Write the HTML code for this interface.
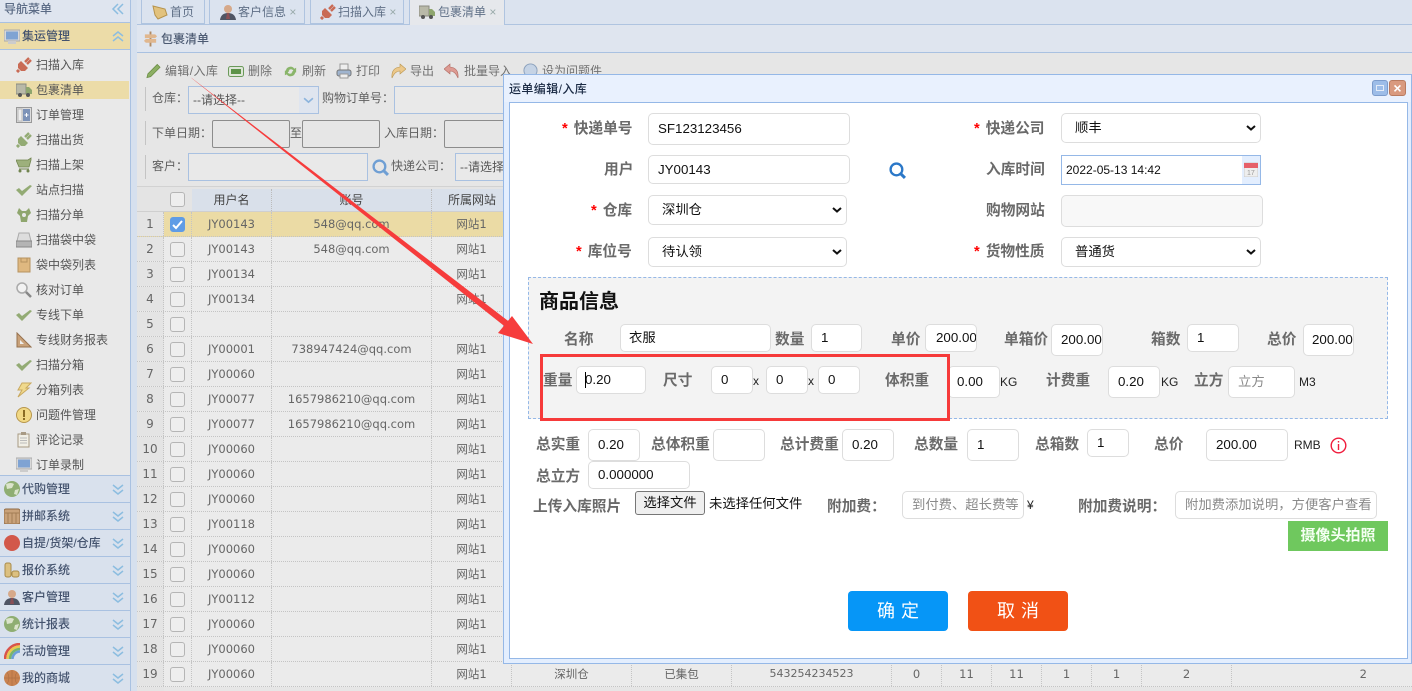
<!DOCTYPE html>
<html lang="zh"><head><meta charset="utf-8"><title>包裹清单</title>
<style>
*{box-sizing:border-box}
html,body{margin:0;padding:0;width:1412px;height:691px;overflow:hidden;background:#e6e6e6}
body{position:relative;font:12px/20px "Liberation Sans","Noto Sans CJK SC",sans-serif;color:#555}
.a,.it,.h,.l,.i,.t,.c,.tb,.fl,.ri{position:absolute}
svg{display:block}
.side{position:absolute;left:0;top:0;width:131px;height:691px;background:#e9e9e9;border-right:1px solid #a9c1e1}
.it{left:36px;height:20px;color:#555;white-space:nowrap}
.ic{position:absolute;width:16px;height:16px}
.h{left:0;width:130px;height:27px;background:#d9e1ed;border-bottom:1px solid #a9c1e1;font-weight:500;color:#44536e;padding-left:22px;line-height:26px;white-space:nowrap}
.h svg.ch{position:absolute;left:111px;top:7px}
.h svg.ic{left:4px;top:5px}
.tab{position:absolute;top:0;height:24px;background:#dbe3ef;border:1px solid #afc4e0;border-top:0;color:#5f6f86;line-height:24px;white-space:nowrap}
.tb{top:61px;color:#707070;white-space:nowrap}
.fl{color:#5f5f5f;white-space:nowrap}
.ri{border:1px solid #a9c1e1;background:#e9e9e9}
.row{position:absolute;left:137px;width:1275px;height:25px;background:#ebebeb;border-bottom:1px dotted #c4c4c4}
.row.s{background:#ebdba5}
.c{top:0;height:24px;line-height:24px;text-align:center;font-family:"DejaVu Sans","Noto Sans CJK SC",sans-serif;font-size:11.5px;color:#666;border-right:1px dotted #c4c4c4;white-space:nowrap}
.n{left:0;width:27px;background:#e4e4e4;color:#666;font-size:12px}
.k{left:27px;width:28px}
.u{left:55px;width:80px}.m{left:135px;width:160px}.w{left:295px;width:80px}
.cb{position:absolute;left:6px;top:5px;width:15px;height:15px;border:1px solid #b5b5b5;border-radius:3px;background:#eee}
.cb.on{background:#5f9ce6;border-color:#5f9ce6}
.modal{position:absolute;left:503px;top:74px;width:909px;height:590px;background:#e3eefe;border:1px solid #95b8e7}
.in{position:absolute;left:5px;top:27px;width:899px;height:557px;background:#fff;border:1px solid #95b8e7}
.m2{position:absolute;left:0;top:0;width:1412px;height:691px;pointer-events:none}
.l{font-size:14.7px;font-weight:700;color:#6a6a6a;white-space:nowrap;line-height:20px}
.l i{font-style:normal;color:#f00;margin-right:6px;font-size:14.7px}
.i{background:#fff;border:1px solid #ddd;border-radius:5px;color:#111;font-size:13.33px;padding-left:9px;display:flex;align-items:center;white-space:nowrap;overflow:hidden}
.i.s{padding-left:13px}
.i .arr{position:absolute;right:4px;top:50%;margin-top:-3px}
.t{color:#222;white-space:nowrap}
.ph{color:#8a8a8a;font-size:13.33px}
</style></head><body>

<svg width="0" height="0" style="position:absolute"><defs>
<symbol id="plug" viewBox="0 0 16 16"><path d="M5 4l7 7-3 3H5L2 11V7z" fill="currentColor"/><path d="M9 5l4-4M11 7l4-4" stroke="currentColor" stroke-width="2.400"/><path d="M3 13l-2 2" stroke="currentColor" stroke-width="3"/></symbol>
<symbol id="truck" viewBox="0 0 16 16"><rect x="0" y="2" width="10" height="10" fill="#b9b9a8" stroke="#8c8c80"/><path d="M10 5h3l3 3v4h-6z" fill="#8fa66e"/><circle cx="4" cy="13" r="2" fill="#555"/><circle cx="12" cy="13" r="2" fill="#555"/></symbol>
<symbol id="panel" viewBox="0 0 16 16"><rect x=".5" y=".5" width="15" height="15" fill="#ddd" stroke="#999"/><rect x="7" y="2" width="7" height="12" fill="#7d93b8"/><rect x="2" y="2" width="4" height="12" fill="#eee" stroke="#bbb"/><path d="M8.500 8h4M10.500 6v4" stroke="#fff"/></symbol>
<symbol id="cart" viewBox="0 0 16 16"><path d="M0 3h12l3-2v2l-2 7H3z" fill="#9db07c" stroke="#71844f" stroke-width=".8"/><path d="M3 12h10" stroke="#71844f"/><circle cx="4" cy="14" r="1.500" fill="#71844f"/><circle cx="12" cy="14" r="1.500" fill="#71844f"/></symbol>
<symbol id="check" viewBox="0 0 16 16"><path d="M0 8l3-2 3 3 8-6 2 1-10 10z" fill="#93ab74"/></symbol>
<symbol id="fork" viewBox="0 0 16 16"><path d="M3 1l3 3h4l3-3 2 5-3 3-1 6H5L4 9 1 6z" fill="#8fa66e"/><circle cx="8" cy="8" r="2" fill="#e9e9e9"/></symbol>
<symbol id="scan" viewBox="0 0 16 16"><path d="M3 1h10l2 8H1z" fill="#ddd" stroke="#aaa"/><rect x="0" y="9" width="16" height="6" fill="#b4b4b4" stroke="#888"/></symbol>
<symbol id="box" viewBox="0 0 16 16"><rect x="2" y="1" width="12" height="14" fill="#dfb880" stroke="#b69260"/><path d="M5 1v4h6V1" fill="none" stroke="#b69260"/></symbol>
<symbol id="mag" viewBox="0 0 16 16"><circle cx="6" cy="6" r="5" fill="#f2f2f2" stroke="#aaa" stroke-width="1.500"/><path d="M10 10l5 5" stroke="#888" stroke-width="2.500"/></symbol>
<symbol id="ruler" viewBox="0 0 16 16"><path d="M1 1l14 14H1z" fill="#c9a27a" stroke="#97724f"/><path d="M4 8l4 4H4z" fill="#eee"/></symbol>
<symbol id="bolt" viewBox="0 0 16 16"><path d="M6 1h9l-5 5h3L2 15l4-7H2z" fill="#f0d98d" stroke="#c9a960"/></symbol>
<symbol id="warn" viewBox="0 0 16 16"><circle cx="8" cy="8" r="7.500" fill="#f1d884" stroke="#b8974d"/><rect x="7" y="3" width="2" height="7" fill="#8a6c23"/><rect x="7" y="11" width="2" height="2" fill="#8a6c23"/></symbol>
<symbol id="clip" viewBox="0 0 16 16"><rect x="2" y="2" width="11" height="13" fill="#f1efe6" stroke="#a89a84"/><rect x="5" y="0" width="5" height="3" fill="#a89a84"/><path d="M4 6h7M4 8.500h7M4 11h7" stroke="#bbb"/></symbol>
<symbol id="mon" viewBox="0 0 16 16"><rect x="0" y="1" width="16" height="11" fill="#d8d8d8" stroke="#aaa"/><rect x="2" y="2.500" width="12" height="8" fill="#7fa3d3"/><rect x="4" y="12" width="8" height="3" fill="#ccc"/></symbol>
<symbol id="globe" viewBox="0 0 16 16"><circle cx="8" cy="8" r="8" fill="#8fae72"/><path d="M2 3q5-2 8 0l-2 4-5 1zM11 9l4-1-2 6-3-1z" fill="#dbe4cb"/></symbol>
<symbol id="crate" viewBox="0 0 16 16"><rect x="0" y="1" width="16" height="15" rx="2" fill="#c9a27a" stroke="#916b44"/><path d="M4 5v10M8 5v10M12 5v10M1 5h14" stroke="#a37d55"/></symbol>
<symbol id="stop" viewBox="0 0 16 16"><circle cx="8" cy="8" r="8" fill="#d2584a"/></symbol>
<symbol id="coin" viewBox="0 0 16 16"><rect x="1" y="1" width="6" height="14" rx="2" fill="#dcc080" stroke="#a98b4a"/><rect x="8" y="9" width="7" height="6" rx="2" fill="#dcc080" stroke="#a98b4a"/></symbol>
<symbol id="per" viewBox="0 0 16 16"><circle cx="8" cy="5" r="4" fill="#d6a98a"/><path d="M0 16q1-7 8-7t8 7z" fill="#4f5564"/><path d="M7 9h2l1 6H6z" fill="#8a4f55"/></symbol>
<symbol id="rain" viewBox="0 0 16 16"><path d="M1 16A15 15 0 0 1 16 1" fill="none" stroke="#d9544a" stroke-width="2.500"/><path d="M3.500 16A12.500 12.500 0 0 1 16 3.500" fill="none" stroke="#e9c94f" stroke-width="2.500"/><path d="M6 16A10 10 0 0 1 16 6" fill="none" stroke="#79b56a" stroke-width="2.500"/><path d="M8.500 16A7.500 7.500 0 0 1 16 8.500" fill="none" stroke="#6b9ed8" stroke-width="2.500"/></symbol>
<symbol id="ball" viewBox="0 0 16 16"><circle cx="8" cy="8" r="8" fill="#c98350"/><path d="M0 8h16M8 0v16M3 2q4 6 0 12M13 2q-4 6 0 12" stroke="#a56a40" fill="none" stroke-width=".5"/></symbol>
<symbol id="dd" viewBox="0 0 14 14"><path d="M2 2l5 4 5-4M2 7l5 4 5-4" fill="none" stroke="#8cbde0" stroke-width="1.500"/></symbol>
<symbol id="du" viewBox="0 0 14 14"><path d="M2 6l5-4 5 4M2 11l5-4 5 4" fill="none" stroke="#8cbde0" stroke-width="1.500"/></symbol>
<symbol id="sel" viewBox="0 0 10 6"><path d="M1 1l4 3.500L9 1" fill="none" stroke="#111" stroke-width="2"/></symbol>
<symbol id="q" viewBox="0 0 16 16"><circle cx="7" cy="7" r="5.500" fill="none" stroke="currentColor" stroke-width="2.200"/><path d="M11 11l4 4" stroke="currentColor" stroke-width="2.800"/></symbol>
</defs></svg>

<!-- sidebar -->
<div class="side">
<div class="a" style="left:0;top:0;width:130px;height:23px;background:#dfe5ef;border-bottom:1px solid #a9c1e1"></div>
<div class="a" style="left:4px;top:-1px;color:#5b6b85;font-weight:500">导航菜单</div>
<svg class="a" style="left:111px;top:2px" width="14" height="14" viewBox="0 0 14 14"><path d="M7 2L2 7l5 5M12 2L7 7l5 5" fill="none" stroke="#8cbde0" stroke-width="1.500"/></svg>
<div class="h" style="top:23px;background:#ecdca8"><svg class="ic" style="top:6px"><use href="#mon"/></svg>集运管理<svg class="ch" width="14" height="14"><use href="#du"/></svg></div>
<div class="a" style="left:0;top:81px;width:129px;height:18px;background:#ecdca8"></div>
<svg class="ic" style="left:16px;top:57px;color:#c96b55"><use href="#plug"/></svg><div class="it" style="top:55px">扫描入库</div>
<svg class="ic" style="left:16px;top:82px"><use href="#truck"/></svg><div class="it" style="top:80px">包裹清单</div>
<svg class="ic" style="left:16px;top:107px"><use href="#panel"/></svg><div class="it" style="top:105px">订单管理</div>
<svg class="ic" style="left:16px;top:132px;color:#93ab74"><use href="#plug"/></svg><div class="it" style="top:130px">扫描出货</div>
<svg class="ic" style="left:16px;top:157px"><use href="#cart"/></svg><div class="it" style="top:155px">扫描上架</div>
<svg class="ic" style="left:16px;top:182px"><use href="#check"/></svg><div class="it" style="top:180px">站点扫描</div>
<svg class="ic" style="left:16px;top:207px"><use href="#fork"/></svg><div class="it" style="top:205px">扫描分单</div>
<svg class="ic" style="left:16px;top:232px"><use href="#scan"/></svg><div class="it" style="top:230px">扫描袋中袋</div>
<svg class="ic" style="left:16px;top:257px"><use href="#box"/></svg><div class="it" style="top:255px">袋中袋列表</div>
<svg class="ic" style="left:16px;top:282px"><use href="#mag"/></svg><div class="it" style="top:280px">核对订单</div>
<svg class="ic" style="left:16px;top:307px"><use href="#check"/></svg><div class="it" style="top:305px">专线下单</div>
<svg class="ic" style="left:16px;top:332px"><use href="#ruler"/></svg><div class="it" style="top:330px">专线财务报表</div>
<svg class="ic" style="left:16px;top:357px"><use href="#check"/></svg><div class="it" style="top:355px">扫描分箱</div>
<svg class="ic" style="left:16px;top:382px"><use href="#bolt"/></svg><div class="it" style="top:380px">分箱列表</div>
<svg class="ic" style="left:16px;top:407px"><use href="#warn"/></svg><div class="it" style="top:405px">问题件管理</div>
<svg class="ic" style="left:16px;top:432px"><use href="#clip"/></svg><div class="it" style="top:430px">评论记录</div>
<svg class="ic" style="left:16px;top:457px"><use href="#mon"/></svg><div class="it" style="top:455px">订单录制</div>
<div class="h" style="top:475px;border-top:1px solid #a9c1e1;height:28px"><svg class="ic"><use href="#globe"/></svg>代购管理<svg class="ch" width="14" height="14"><use href="#dd"/></svg></div>
<div class="h" style="top:503px"><svg class="ic"><use href="#crate"/></svg>拼邮系统<svg class="ch" width="14" height="14"><use href="#dd"/></svg></div>
<div class="h" style="top:530px"><svg class="ic"><use href="#stop"/></svg>自提/货架/仓库<svg class="ch" width="14" height="14"><use href="#dd"/></svg></div>
<div class="h" style="top:557px"><svg class="ic"><use href="#coin"/></svg>报价系统<svg class="ch" width="14" height="14"><use href="#dd"/></svg></div>
<div class="h" style="top:584px"><svg class="ic"><use href="#per"/></svg>客户管理<svg class="ch" width="14" height="14"><use href="#dd"/></svg></div>
<div class="h" style="top:611px"><svg class="ic"><use href="#globe"/></svg>统计报表<svg class="ch" width="14" height="14"><use href="#dd"/></svg></div>
<div class="h" style="top:638px"><svg class="ic"><use href="#rain"/></svg>活动管理<svg class="ch" width="14" height="14"><use href="#dd"/></svg></div>
<div class="h" style="top:665px"><svg class="ic"><use href="#ball"/></svg>我的商城<svg class="ch" width="14" height="14"><use href="#dd"/></svg></div>
</div>
<div class="a" style="left:131px;top:0;width:6px;height:691px;background:#d6e0ee"></div>

<!-- tabs -->
<div class="a" style="left:137px;top:0;width:1275px;height:25px;background:#dbe3ef;border-bottom:1px solid #afc4e0"></div>
<div class="tab" style="left:141px;width:64px;padding-left:28px"><svg class="ic" style="left:10px;top:4px" viewBox="0 0 16 16"><path d="M1 2l12 3 2 6-9 4-3-4z" fill="#e2c27d" stroke="#b5934d"/></svg>首页</div>
<div class="tab" style="left:209px;width:96px;padding-left:28px"><svg class="ic" style="left:10px;top:4px"><use href="#per"/></svg>客户信息 <span style="color:#9aa">×</span></div>
<div class="tab" style="left:310px;width:94px;padding-left:27px"><svg class="ic" style="left:9px;top:4px;color:#c96b55"><use href="#plug"/></svg>扫描入库 <span style="color:#9aa">×</span></div>
<div class="tab" style="left:409px;width:96px;height:25px;padding-left:28px;background:#e6e8ec;border-bottom:0"><svg class="ic" style="left:9px;top:4px"><use href="#truck"/></svg>包裹清单 <span style="color:#9aa">×</span></div>

<!-- title -->
<div class="a" style="left:137px;top:25px;width:1275px;height:28px;background:#dfe5ef;border-bottom:1px solid #a9c1e1"></div>
<svg class="a" style="left:143px;top:31px" width="15" height="16" viewBox="0 0 16 16"><path d="M7 0h2v16H7z" fill="#b08a64"/><path d="M2 3h11l2 2-2 2H2zM14 8H3L1 10l2 2h11z" fill="#e0b78f"/></svg>
<div class="a" style="left:161px;top:29px;color:#4c5a72;font-weight:500">包裹清单</div>

<!-- toolbar -->
<svg class="a" style="left:146px;top:63px" width="15" height="16" viewBox="0 0 16 16"><path d="M1 15l1-4L12 1l3 3L5 14z" fill="#8caf63" stroke="#6a8c45" stroke-width=".8"/></svg><div class="tb" style="left:165px;letter-spacing:.4px">编辑/入库</div>
<svg class="a" style="left:228px;top:66px" width="16" height="11"><rect x=".5" y=".5" width="15" height="10" rx="2" fill="#dfe6d8" stroke="#6b9a5a"/><rect x="3" y="3" width="10" height="5" fill="#5d9348"/></svg><div class="tb" style="left:248px">删除</div>
<svg class="a" style="left:283px;top:64px" width="15" height="15" viewBox="0 0 16 16"><path d="M3 7a5 5 0 0 1 9-2l2-1v5h-5l2-2a3 3 0 0 0-5 0zM13 9a5 5 0 0 1-9 2l-2 1V7h5L5 9a3 3 0 0 0 5 0z" fill="#8ab56a"/></svg><div class="tb" style="left:302px">刷新</div>
<svg class="a" style="left:336px;top:63px" width="16" height="16" viewBox="0 0 16 16"><rect x="4" y="1" width="8" height="6" fill="#eee" stroke="#999"/><rect x="1" y="7" width="14" height="6" rx="2" fill="#9fb4cf" stroke="#777"/><rect x="4" y="11" width="8" height="4" fill="#eee" stroke="#999"/></svg><div class="tb" style="left:356px">打印</div>
<svg class="a" style="left:390px;top:63px" width="16" height="16" viewBox="0 0 16 16"><path d="M10 1l6 5-6 5V8Q5 8 2 15 1 5 10 4z" fill="#ecc88a" stroke="#b99550" stroke-width=".6"/></svg><div class="tb" style="left:410px">导出</div>
<svg class="a" style="left:444px;top:63px" width="16" height="16" viewBox="0 0 16 16"><path d="M6 1L0 6l6 5V8q5 0 8 7 1-10-8-11z" fill="#dd9b93" stroke="#b06b62" stroke-width=".6"/></svg><div class="tb" style="left:464px">批量导入</div>
<svg class="a" style="left:523px;top:63px" width="15" height="15" viewBox="0 0 16 16"><circle cx="8" cy="8" r="7" fill="#c5d3e5" stroke="#8aa0bc"/></svg><div class="tb" style="left:542px">设为问题件</div>

<!-- filters -->
<div class="a" style="left:145px;top:87px;width:1px;height:24px;background:#c4c4c4"></div>
<div class="a" style="left:145px;top:121px;width:1px;height:24px;background:#c4c4c4"></div>
<div class="a" style="left:145px;top:155px;width:1px;height:24px;background:#c4c4c4"></div>
<div class="fl" style="left:152px;top:88px">仓库：</div>
<div class="ri" style="left:188px;top:86px;width:131px;height:28px;padding-left:4px;line-height:27px;color:#555">--请选择--<div class="a" style="right:0;top:0;width:19px;height:26px;background:#dfe5ef"></div><svg class="a" style="right:4px;top:10px" width="11" height="7" viewBox="0 0 10 6"><path d="M1 1l4 3.500L9 1" fill="none" stroke="#8cb4dd" stroke-width="1.500"/></svg></div>
<div class="fl" style="left:322px;top:88px">购物订单号：</div>
<div class="ri" style="left:394px;top:86px;width:115px;height:28px"></div>
<div class="fl" style="left:152px;top:123px">下单日期：</div>
<div class="a" style="left:212px;top:120px;width:78px;height:28px;border:1px solid #8c8c8c;border-radius:2px"></div>
<div class="fl" style="left:290px;top:123px">至</div>
<div class="a" style="left:302px;top:120px;width:78px;height:28px;border:1px solid #8c8c8c;border-radius:2px"></div>
<div class="fl" style="left:384px;top:123px">入库日期：</div>
<div class="a" style="left:444px;top:120px;width:70px;height:28px;border:1px solid #8c8c8c;border-radius:2px"></div>
<div class="fl" style="left:152px;top:156px">客户：</div>
<div class="ri" style="left:188px;top:153px;width:180px;height:28px"></div>
<svg class="a" style="left:372px;top:159px;color:#6f9fd4" width="17" height="17"><use href="#q"/></svg>
<div class="fl" style="left:391px;top:156px">快递公司：</div>
<div class="ri" style="left:455px;top:153px;width:60px;height:28px;padding-left:4px;line-height:27px;white-space:nowrap;overflow:hidden">--请选择</div>

<!-- table -->
<div class="a" style="left:137px;top:186px;width:1275px;height:26px;background:#e4e4e4;border-top:1px solid #d2d2d2;border-bottom:1px solid #cfcfcf"></div>
<div class="a" style="left:192px;top:189px;width:320px;height:22px;background:#d9e0ea"></div>
<div class="cb" style="left:170px;top:192px"></div>
<div class="a" style="left:192px;top:189px;width:80px;line-height:22px;text-align:center;color:#444;border-right:1px dotted #bbb;height:22px">用户名</div>
<div class="a" style="left:272px;top:189px;width:160px;line-height:22px;text-align:center;color:#444;border-right:1px dotted #bbb;height:22px">账号</div>
<div class="a" style="left:432px;top:189px;width:80px;line-height:22px;text-align:center;color:#444;height:22px">所属网站</div>

<div class="row s" style="top:212px"><div class="c n">1</div><div class="c k"><div class="cb on"><svg width="13" height="13" viewBox="0 0 13 13"><path d="M2 7l3 3 6-7" fill="none" stroke="#fff" stroke-width="2"/></svg></div></div><div class="c u">JY00143</div><div class="c m">548@qq.com</div><div class="c w">网站1</div></div>
<div class="row" style="top:237px"><div class="c n">2</div><div class="c k"><div class="cb"></div></div><div class="c u">JY00143</div><div class="c m">548@qq.com</div><div class="c w">网站1</div></div>
<div class="row" style="top:262px"><div class="c n">3</div><div class="c k"><div class="cb"></div></div><div class="c u">JY00134</div><div class="c m"></div><div class="c w">网站1</div></div>
<div class="row" style="top:287px"><div class="c n">4</div><div class="c k"><div class="cb"></div></div><div class="c u">JY00134</div><div class="c m"></div><div class="c w">网站1</div></div>
<div class="row" style="top:312px"><div class="c n">5</div><div class="c k"><div class="cb"></div></div><div class="c u"></div><div class="c m"></div><div class="c w"></div></div>
<div class="row" style="top:337px"><div class="c n">6</div><div class="c k"><div class="cb"></div></div><div class="c u">JY00001</div><div class="c m">738947424@qq.com</div><div class="c w">网站1</div></div>
<div class="row" style="top:362px"><div class="c n">7</div><div class="c k"><div class="cb"></div></div><div class="c u">JY00060</div><div class="c m"></div><div class="c w">网站1</div></div>
<div class="row" style="top:387px"><div class="c n">8</div><div class="c k"><div class="cb"></div></div><div class="c u">JY00077</div><div class="c m">1657986210@qq.com</div><div class="c w">网站1</div></div>
<div class="row" style="top:412px"><div class="c n">9</div><div class="c k"><div class="cb"></div></div><div class="c u">JY00077</div><div class="c m">1657986210@qq.com</div><div class="c w">网站1</div></div>
<div class="row" style="top:437px"><div class="c n">10</div><div class="c k"><div class="cb"></div></div><div class="c u">JY00060</div><div class="c m"></div><div class="c w">网站1</div></div>
<div class="row" style="top:462px"><div class="c n">11</div><div class="c k"><div class="cb"></div></div><div class="c u">JY00060</div><div class="c m"></div><div class="c w">网站1</div></div>
<div class="row" style="top:487px"><div class="c n">12</div><div class="c k"><div class="cb"></div></div><div class="c u">JY00060</div><div class="c m"></div><div class="c w">网站1</div></div>
<div class="row" style="top:512px"><div class="c n">13</div><div class="c k"><div class="cb"></div></div><div class="c u">JY00118</div><div class="c m"></div><div class="c w">网站1</div></div>
<div class="row" style="top:537px"><div class="c n">14</div><div class="c k"><div class="cb"></div></div><div class="c u">JY00060</div><div class="c m"></div><div class="c w">网站1</div></div>
<div class="row" style="top:562px"><div class="c n">15</div><div class="c k"><div class="cb"></div></div><div class="c u">JY00060</div><div class="c m"></div><div class="c w">网站1</div></div>
<div class="row" style="top:587px"><div class="c n">16</div><div class="c k"><div class="cb"></div></div><div class="c u">JY00112</div><div class="c m"></div><div class="c w">网站1</div></div>
<div class="row" style="top:612px"><div class="c n">17</div><div class="c k"><div class="cb"></div></div><div class="c u">JY00060</div><div class="c m"></div><div class="c w">网站1</div></div>
<div class="row" style="top:637px"><div class="c n">18</div><div class="c k"><div class="cb"></div></div><div class="c u">JY00060</div><div class="c m"></div><div class="c w">网站1</div></div>
<div class="row" style="top:662px"><div class="c n">19</div><div class="c k"><div class="cb"></div></div><div class="c u">JY00060</div><div class="c m"></div><div class="c w">网站1</div>
<div class="c" style="left:375px;width:120px">深圳仓</div><div class="c" style="left:495px;width:100px">已集包</div><div class="c" style="left:595px;width:160px;font-size:11px">543254234523</div><div class="c" style="left:755px;width:50px">0</div><div class="c" style="left:805px;width:50px">11</div><div class="c" style="left:855px;width:50px">11</div><div class="c" style="left:905px;width:50px">1</div><div class="c" style="left:955px;width:50px">1</div><div class="c" style="left:1005px;width:90px">2</div><div class="c" style="left:1095px;width:180px;text-align:right;padding-right:45px;border-right:0">2</div></div>
<div class="a" style="left:137px;top:687px;width:27px;height:4px;background:#e4e4e4"></div>

<!-- modal -->
<div class="modal">
<div class="a" style="left:0;top:0;width:100%;height:27px;background:#e9f1fe"></div>
<div class="a" style="left:5px;top:4px;color:#1a2a44;font-weight:500;letter-spacing:.4px">运单编辑/入库</div>
<div class="in"></div>
<div class="a" style="left:868px;top:5px;width:16px;height:16px;background:#9dbde8;border:1px solid #7c9ccc;border-radius:3px"><div class="a" style="left:3px;top:4px;width:8px;height:6px;border:1px solid #e4ecf8"></div></div>
<div class="a" style="left:885px;top:5px;width:17px;height:16px;background:#d99a7f;border:1px solid #b97b60;border-radius:3px;color:#fff;font-size:14px;line-height:14px;text-align:center;font-weight:700">×</div>
</div>

<div class="m2">
<div class="l" style="left:562px;top:119px"><i>*</i>快递单号</div>
<div class="i" style="left:648px;top:113px;width:202px;height:32px">SF123123456</div>
<div class="l" style="left:604px;top:160px">用户</div>
<div class="i" style="left:648px;top:155px;width:202px;height:29px">JY00143</div>
<svg class="a" style="left:889px;top:162px;color:#2b78c8" width="17" height="17"><use href="#q"/></svg>
<div class="l" style="left:591px;top:201px"><i>*</i>仓库</div>
<div class="i s" style="left:648px;top:195px;width:199px;height:30px">深圳仓<svg class="arr" width="10" height="6"><use href="#sel"/></svg></div>
<div class="l" style="left:576px;top:242px"><i>*</i>库位号</div>
<div class="i s" style="left:648px;top:237px;width:199px;height:30px">待认领<svg class="arr" width="10" height="6"><use href="#sel"/></svg></div>

<div class="l" style="left:974px;top:119px"><i>*</i>快递公司</div>
<div class="i s" style="left:1061px;top:113px;width:200px;height:30px">顺丰<svg class="arr" width="10" height="6"><use href="#sel"/></svg></div>
<div class="l" style="left:986px;top:160px">入库时间</div>
<div class="i" style="left:1061px;top:155px;width:200px;height:30px;border:1px solid #95b8e7;border-radius:0;padding-left:4px;font-size:12px">2022-05-13 14:42<div class="a" style="right:0;top:0;width:18px;height:28px;background:#e3eefe"></div><svg class="a" style="right:2px;top:6px" width="14" height="15" viewBox="0 0 14 15"><rect y="1" width="14" height="14" fill="#eee" stroke="#ccc"/><rect y="1" width="14" height="5" fill="#e6606a"/><text x="3" y="13" font-size="7" fill="#999" font-family="Liberation Sans">17</text></svg></div>
<div class="l" style="left:986px;top:201px">购物网站</div>
<div class="i" style="left:1061px;top:195px;width:202px;height:32px;background:#f8f8f8"></div>
<div class="l" style="left:974px;top:242px"><i>*</i>货物性质</div>
<div class="i s" style="left:1061px;top:237px;width:200px;height:30px">普通货<svg class="arr" width="10" height="6"><use href="#sel"/></svg></div>

<div class="a" style="left:528px;top:277px;width:860px;height:142px;background:#f3f3f3;border:1px dashed #95b8e7"></div>
<div class="a" style="left:539px;top:290px;font-size:20px;font-weight:700;color:#111;line-height:24px">商品信息</div>

<div class="l" style="left:564px;top:330px">名称</div>
<div class="i" style="left:620px;top:324px;width:151px;height:28px;padding-left:8px">衣服</div>
<div class="l" style="left:775px;top:330px">数量</div>
<div class="i" style="left:811px;top:324px;width:51px;height:28px;padding-left:9px">1</div>
<div class="l" style="left:891px;top:330px">单价</div>
<div class="i" style="left:925px;top:324px;width:52px;height:28px;padding-left:10px">200.00</div>
<div class="l" style="left:1004px;top:330px">单箱价</div>
<div class="i" style="left:1051px;top:324px;width:52px;height:32px;padding-left:9px">200.00</div>
<div class="l" style="left:1151px;top:330px">箱数</div>
<div class="i" style="left:1187px;top:324px;width:52px;height:28px;padding-left:9px">1</div>
<div class="l" style="left:1267px;top:330px">总价</div>
<div class="i" style="left:1303px;top:324px;width:51px;height:32px;padding-left:8px">200.00</div>

<div class="l" style="left:543px;top:371px">重量</div>
<div class="i" style="left:576px;top:366px;width:70px;height:28px;padding-left:8px">0.20</div>
<div class="a" style="left:585px;top:372px;width:1px;height:16px;background:#000"></div>
<div class="l" style="left:663px;top:371px">尺寸</div>
<div class="i" style="left:711px;top:366px;width:42px;height:28px;padding-left:9px">0</div>
<div class="t" style="left:753px;top:371px;font-size:12px">x</div>
<div class="i" style="left:766px;top:366px;width:42px;height:28px;padding-left:9px">0</div>
<div class="t" style="left:808px;top:371px;font-size:12px">x</div>
<div class="i" style="left:818px;top:366px;width:42px;height:28px;padding-left:9px">0</div>
<div class="l" style="left:885px;top:371px">体积重</div>
<div class="i" style="left:948px;top:366px;width:52px;height:32px;padding-left:8px">0.00</div>
<div class="t" style="left:1000px;top:372px">KG</div>
<div class="l" style="left:1046px;top:371px">计费重</div>
<div class="i" style="left:1108px;top:366px;width:52px;height:32px;padding-left:9px">0.20</div>
<div class="t" style="left:1161px;top:372px">KG</div>
<div class="l" style="left:1194px;top:371px">立方</div>
<div class="i ph" style="left:1228px;top:366px;width:67px;height:32px;padding-left:9px;color:#8a8a8a">立方</div>
<div class="t" style="left:1299px;top:372px">M3</div>

<div class="l" style="left:536px;top:435px">总实重</div>
<div class="i" style="left:588px;top:429px;width:52px;height:32px;padding-left:9px">0.20</div>
<div class="l" style="left:651px;top:435px">总体积重</div>
<div class="i" style="left:713px;top:429px;width:52px;height:32px"></div>
<div class="l" style="left:780px;top:435px">总计费重</div>
<div class="i" style="left:842px;top:429px;width:52px;height:32px;padding-left:9px">0.20</div>
<div class="l" style="left:914px;top:435px">总数量</div>
<div class="i" style="left:967px;top:429px;width:52px;height:32px;padding-left:9px">1</div>
<div class="l" style="left:1035px;top:435px">总箱数</div>
<div class="i" style="left:1087px;top:429px;width:42px;height:28px;padding-left:9px">1</div>
<div class="l" style="left:1154px;top:435px">总价</div>
<div class="i" style="left:1206px;top:429px;width:82px;height:32px;padding-left:9px">200.00</div>
<div class="t" style="left:1294px;top:435px">RMB</div>
<svg class="a" style="left:1330px;top:437px" width="17" height="17" viewBox="0 0 17 17"><circle cx="8.500" cy="8.500" r="7.300" fill="none" stroke="#f01c3c" stroke-width="1.400"/><path d="M8.500 7v6M8.500 4v1.500" stroke="#f01c3c" stroke-width="1.400"/></svg>

<div class="l" style="left:536px;top:467px">总立方</div>
<div class="i" style="left:588px;top:461px;width:102px;height:28px;padding-left:9px">0.000000</div>

<div class="l" style="left:533px;top:497px">上传入库照片</div>
<div class="a" style="left:635px;top:491px;width:70px;height:24px;background:#efefef;border:1px solid #767676;border-radius:3px;text-align:center;line-height:22px;color:#111;font-size:13.33px">选择文件</div>
<div class="t" style="left:709px;top:494px;font-size:13.33px;color:#111">未选择任何文件</div>
<div class="l" style="left:827px;top:497px">附加费：</div>
<div class="i ph" style="left:902px;top:491px;width:122px;height:28px;padding-left:9px;color:#8a8a8a">到付费、超长费等</div>
<div class="t" style="left:1027px;top:495px">¥</div>
<div class="l" style="left:1078px;top:497px">附加费说明：</div>
<div class="i ph" style="left:1175px;top:491px;width:202px;height:28px;padding-left:9px;color:#8a8a8a">附加费添加说明，方便客户查看</div>
<div class="a" style="left:1288px;top:521px;width:100px;height:30px;background:#6fc85e;color:#f4fff2;font-size:15px;font-weight:700;text-align:center;line-height:29px">摄像头拍照</div>

<div class="a" style="left:848px;top:591px;width:100px;height:40px;background:#0696f7;border-radius:4px;color:#fff;font-size:18px;line-height:40px;text-align:center;letter-spacing:6px;padding-left:6px">确定</div>
<div class="a" style="left:968px;top:591px;width:100px;height:40px;background:#f15115;border-radius:4px;color:#fff;font-size:18px;line-height:40px;text-align:center;letter-spacing:6px;padding-left:6px">取消</div>

<svg class="a" style="left:0;top:0" width="1412" height="691">
<polygon points="191,77.500 192,78.500 505.500,327 509.500,322" fill="#f63c3c"/>
<polygon points="533,344 512,316 498,333" fill="#f63c3c"/>
<rect x="541.500" y="355.500" width="407" height="64" fill="none" stroke="#f63a3a" stroke-width="3"/>
</svg>
</div>
</body></html>
